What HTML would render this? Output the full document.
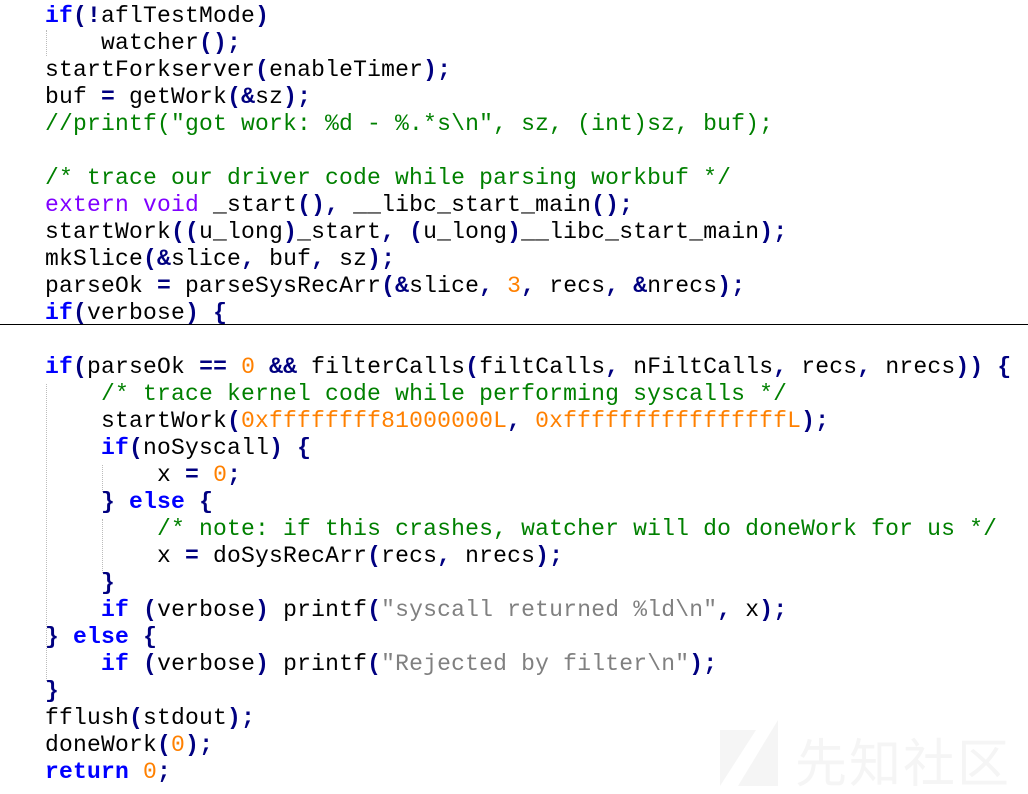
<!DOCTYPE html>
<html><head><meta charset="utf-8"><style>
html,body{margin:0;padding:0;background:#fff;width:1028px;height:794px;overflow:hidden;position:relative}
pre{position:absolute;left:45px;top:3px;margin:0;font-family:"Liberation Mono","Courier New",monospace;font-size:23px;line-height:27px;letter-spacing:0.2px;color:#000}
.k{color:#0000ff;font-weight:bold}.t{color:#8000ff}.c{color:#008000}.n{color:#ff8000}.s{color:#808080}.o{color:#000080;font-weight:bold}
.hr{position:absolute;left:0;top:324px;width:1028px;height:1px;background:#000}
.g{position:absolute;width:0;border-left:1px dotted #bbb}
.wm{position:absolute;left:795px;top:722px;font-family:"Noto Sans CJK SC",sans-serif;font-size:52px;color:#f5f5f5;letter-spacing:2px}
</style></head><body>
<div class="g" style="left:46px;top:30px;height:26px"></div>
<div class="g" style="left:46px;top:384px;height:297px"></div>
<div class="g" style="left:102px;top:465px;height:27px"></div>
<div class="g" style="left:102px;top:519px;height:54px"></div>
<div class="g" style="left:46px;top:654px;height:27px"></div>
<svg style="position:absolute;left:720px;top:720px" width="58" height="68"><polygon points="0,10 36,10 0,66" fill="#f5f5f5"/><polygon points="58,0 58,66 18,66" fill="#f5f5f5"/></svg>
<div class="wm">先知社区</div>
<div class="hr"></div>
<pre><span class="k">if</span><span class="o">(!</span>aflTestMode<span class="o">)</span>
    watcher<span class="o">();</span>
startForkserver<span class="o">(</span>enableTimer<span class="o">);</span>
buf <span class="o">=</span> getWork<span class="o">(&amp;</span>sz<span class="o">);</span>
<span class="c">//printf("got work: %d - %.*s\n", sz, (int)sz, buf);</span>

<span class="c">/* trace our driver code while parsing workbuf */</span>
<span class="t">extern</span> <span class="t">void</span> _start<span class="o">(),</span> __libc_start_main<span class="o">();</span>
startWork<span class="o">((</span>u_long<span class="o">)</span>_start<span class="o">,</span> <span class="o">(</span>u_long<span class="o">)</span>__libc_start_main<span class="o">);</span>
mkSlice<span class="o">(&amp;</span>slice<span class="o">,</span> buf<span class="o">,</span> sz<span class="o">);</span>
parseOk <span class="o">=</span> parseSysRecArr<span class="o">(&amp;</span>slice<span class="o">,</span> <span class="n">3</span><span class="o">,</span> recs<span class="o">,</span> <span class="o">&amp;</span>nrecs<span class="o">);</span>
<span class="k">if</span><span class="o">(</span>verbose<span class="o">)</span> <span class="o">{</span>

<span class="k">if</span><span class="o">(</span>parseOk <span class="o">==</span> <span class="n">0</span> <span class="o">&amp;&amp;</span> filterCalls<span class="o">(</span>filtCalls<span class="o">,</span> nFiltCalls<span class="o">,</span> recs<span class="o">,</span> nrecs<span class="o">))</span> <span class="o">{</span>
    <span class="c">/* trace kernel code while performing syscalls */</span>
    startWork<span class="o">(</span><span class="n">0xffffffff81000000L</span><span class="o">,</span> <span class="n">0xffffffffffffffffL</span><span class="o">);</span>
    <span class="k">if</span><span class="o">(</span>noSyscall<span class="o">)</span> <span class="o">{</span>
        x <span class="o">=</span> <span class="n">0</span><span class="o">;</span>
    <span class="o">}</span> <span class="k">else</span> <span class="o">{</span>
        <span class="c">/* note: if this crashes, watcher will do doneWork for us */</span>
        x <span class="o">=</span> doSysRecArr<span class="o">(</span>recs<span class="o">,</span> nrecs<span class="o">);</span>
    <span class="o">}</span>
    <span class="k">if</span> <span class="o">(</span>verbose<span class="o">)</span> printf<span class="o">(</span><span class="s">"syscall returned %ld\n"</span><span class="o">,</span> x<span class="o">);</span>
<span class="o">}</span> <span class="k">else</span> <span class="o">{</span>
    <span class="k">if</span> <span class="o">(</span>verbose<span class="o">)</span> printf<span class="o">(</span><span class="s">"Rejected by filter\n"</span><span class="o">);</span>
<span class="o">}</span>
fflush<span class="o">(</span>stdout<span class="o">);</span>
doneWork<span class="o">(</span><span class="n">0</span><span class="o">);</span>
<span class="k">return</span> <span class="n">0</span><span class="o">;</span></pre>
</body></html>
